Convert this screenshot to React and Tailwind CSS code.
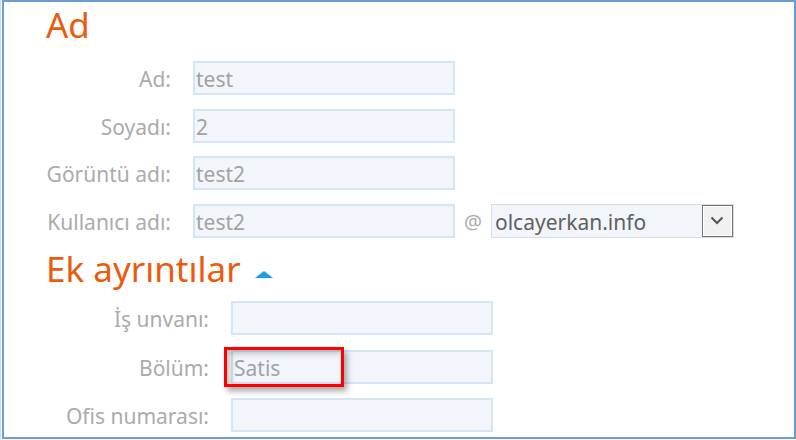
import React from 'react'

const font = { fontFamily: '"Noto Sans", "Open Sans", sans-serif' }

function Field({ value, className = '' }) {
  return (
    <div className={`flex h-[34px] items-center border-2 border-[#d4e5f6] bg-[#f2f6fb] pl-[1px] pt-[3px] text-[21px] text-[#a2a2a2] ${className}`}>
      {value}
    </div>
  )
}

function Row({ label, value, labelW, children }) {
  return (
    <div className="flex items-center">
      <div className={`${labelW} pt-[3px] text-right text-[21px] text-[#ababab]`}>{label}</div>
      <Field value={value} className="ml-[22px] w-[262px]" />
      {children}
    </div>
  )
}

export default function App() {
  return (
    <div className="h-[440px] w-[796px] overflow-hidden bg-white" style={font}>
      <div className="relative h-[439px] w-[796px] border-l border-[#c9dbee] pl-px">
        <div className="h-full border-t-2 border-r-2 border-b-2 border-l-2 border-[#6a9ed2] pl-[42px] pt-[5px]">
          <h1 className="h-[36px] text-[35px] leading-[36px] font-normal text-[#ec5a0c]">Ad</h1>

          <div className="mt-[18px] flex flex-col gap-[13px]">
            <Row label="Ad:" value="test" labelW="w-[125px]" />
            <Row label="Soyadı:" value="2" labelW="w-[125px]" />
            <Row label="Görüntü adı:" value="test2" labelW="w-[125px]" />
            <Row label="Kullanıcı adı:" value="test2" labelW="w-[125px]">
              <span className="ml-[9px] pt-[3px] text-[20px] text-[#ababab]">@</span>
              <div className="ml-[9px] flex h-[34px] w-[243px] border border-[#d6dde5] bg-[#f2f6fb]">
                <div className="flex flex-1 items-center pl-[3px] pt-[3px] text-[21px] text-[#606060]">olcayerkan.info</div>
                <div className="flex w-[31px] items-center justify-center border border-[#747474] bg-[#f1f1f1] shadow-[inset_0_0_0_1px_#ffffff]">
                  <svg width="14" height="9" viewBox="0 0 14 9">
                    <path d="M1.5 1.5 L7 7 L12.5 1.5" fill="none" stroke="#555" strokeWidth="2" />
                  </svg>
                </div>
              </div>
            </Row>
          </div>

          <div className="mt-[13px] flex h-[35px] items-start">
            <h2 className="text-[35px] leading-[35px] font-normal text-[#ec5a0c]">Ek ayrıntılar</h2>
            <svg className="ml-[14px] mt-[20px]" width="18" height="7" viewBox="0 0 18 7">
              <path d="M0 7 L9 0 L18 7 Z" fill="#1ba1e2" />
            </svg>
          </div>

          <div className="mt-[15px] flex flex-col gap-[14px]">
            <Row label="İş unvanı:" value="" labelW="w-[163px]" />
            <Row label="Bölüm:" value="Satis" labelW="w-[163px]" />
            <Row label="Ofis numarası:" value="" labelW="w-[163px]" />
          </div>
        </div>

        <div className="absolute left-[223px] top-[347px] h-[40px] w-[120px] border-[3px] border-[#ff0000] shadow-[3px_4px_6px_rgba(0,0,0,0.35),inset_3px_3px_6px_rgba(0,0,0,0.25)]" />
      </div>
    </div>
  )
}
